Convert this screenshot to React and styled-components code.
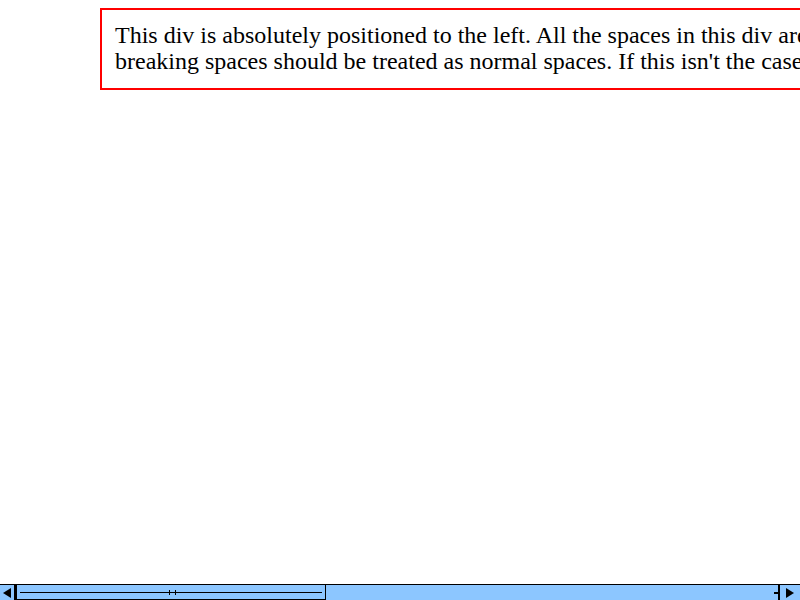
import React from 'react';
import styled, { createGlobalStyle } from 'styled-components';

const GlobalStyle = createGlobalStyle`
    html, body {
        margin: 0;
        padding: 0;
        overflow: hidden;
        background: #ffffff;
    }
    body {
        font-family: "Liberation Serif", "Times New Roman", serif;
    }
`;

const Page = styled.div`
    position: relative;
    width: 800px;
    height: 600px;
    overflow: hidden;
`;

const Box = styled.div`
    position: absolute;
    top: 8px;
    left: 100px;
    border: 2px solid #ff0000;
    padding: 12px 12px 14px 13px;
    font-size: 24px;
    line-height: 26px;
    color: #000;
    white-space: nowrap;
`;

// fake horizontal scrollbar laid over the bottom of the page
const Scrollbar = styled.div`
    position: absolute;
    left: 0;
    right: 0;
    bottom: 0;
    height: 16px;
    box-sizing: border-box;
    background: #8cc6ff;
    border-top: 1px solid #000;
    display: flex;
    align-items: stretch;
`;

const ArrowButton = styled.div`
    width: ${p => p.$w || 16}px;
    flex: none;
    box-sizing: border-box;
    border-${p => (p.$side === 'left' ? 'right' : 'left')}: 2px solid #000;
    display: flex;
    align-items: center;
    justify-content: center;

    &::before {
        content: '';
        width: 0;
        height: 0;
        border-top: 5px solid transparent;
        border-bottom: 5px solid transparent;
        ${p => (p.$side === 'left'
            ? 'border-right: 8px solid #000;'
            : 'border-left: 8px solid #000;')}
    }
`;

const Track = styled.div`
    flex: 1;
    position: relative;
    display: flex;
    align-items: stretch;
`;

const Thumb = styled.div`
    width: 310px;
    box-sizing: border-box;
    border: 1px solid #000;
    border-top: none;
    display: flex;
    align-items: center;
    padding: 0 3px;
    position: relative;
`;

const Grip = styled.div`
    flex: 1;
    height: 1px;
    background: #000;
    position: relative;

    &::before, &::after {
        content: '';
        position: absolute;
        top: -2px;
        width: 1px;
        height: 5px;
        background: #000;
    }
    &::before { left: 149px; }
    &::after { left: 155px; }
`;

const EndTick = styled.div`
    margin-left: auto;
    align-self: center;
    width: 4px;
    height: 2px;
    background: #000;
`;

export default function App() {
    return (
        <Page>
            <GlobalStyle />
            <Box>
                This div is absolutely positioned to the left. All the spaces in this div are non-
                <br />
                breaking spaces should be treated as normal spaces. If this isn't the case, the test fails.
            </Box>
            <Scrollbar>
                <ArrowButton $side="left" />
                <Track>
                    <Thumb>
                        <Grip />
                    </Thumb>
                    <EndTick />
                </Track>
                <ArrowButton $side="right" $w={22} />
            </Scrollbar>
        </Page>
    );
}
